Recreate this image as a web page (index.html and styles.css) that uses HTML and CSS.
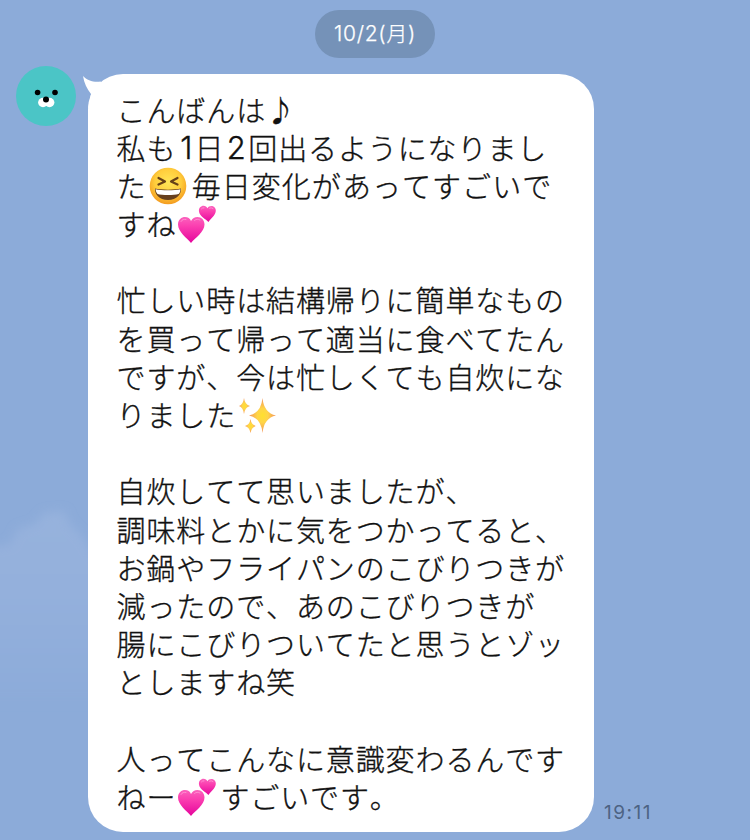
FILE: index.html
```
<!DOCTYPE html>
<html lang="ja">
<head>
<meta charset="utf-8">
<title>トーク</title>
<link rel="stylesheet" href="styles.css">
</head>
<body>
<svg class="defs" width="0" height="0" aria-hidden="true">
  <defs>
    <linearGradient id="pink" x1="0" y1="0" x2="0" y2="1"><stop offset="0" stop-color="#fb62bd"/><stop offset=".35" stop-color="#fb3fb0"/><stop offset="1" stop-color="#e5059c"/></linearGradient>
    <radialGradient id="face" cx=".5" cy=".4" r=".6"><stop offset="0" stop-color="#ffe657"/><stop offset=".6" stop-color="#ffcd3c"/><stop offset="1" stop-color="#f39b20"/></radialGradient>
    <radialGradient id="gold"><stop offset="0" stop-color="#ffe02e"/><stop offset=".4" stop-color="#ffd548"/><stop offset="1" stop-color="#f3935c"/></radialGradient>
    <filter id="soft" x="-30%" y="-30%" width="160%" height="160%"><feGaussianBlur stdDeviation="5"/></filter>
    <linearGradient id="cloud" x1="0" y1="0" x2="0" y2="1"><stop offset="0" stop-color="#96b2dd"/><stop offset=".4" stop-color="#94b0dc"/><stop offset="1" stop-color="#8cabd9"/></linearGradient>
    <symbol id="hearts" viewBox="0 0 40 40">
      <path fill="url(#pink)" d="M14 38C10 33 1 27 1 19.500C1 14.500 4.500 12 8 12C11 12 13 13.500 14 16C15.500 13.500 17.500 12 20.500 12C24.500 12 27.500 15 27.500 19.500C27.500 27 18 33 14 38Z"/>
      <path fill="url(#pink)" d="M31.500 17C29 14 22.500 11.500 22 6.500C21.500 3 24 .8 26.500 .8C28.500 .8 29.700 1.700 30.500 3.300C31.200 1.700 32.500 .9 34.500 .9C37 .9 39 3 38.800 6C38.300 11 33.500 13.500 31.500 17Z"/>
      <path fill="none" stroke="#ff9ad6" stroke-linecap="round" opacity=".8" d="M4 16.500C5 14.500 7 14 9 14.500M17.500 15.500C19 14 21 13.800 23 15M24.500 3.800Q25.500 2.500 27 2.800M32.500 3.200Q34 2 36 3.500"/>
    </symbol>
  </defs>
</svg>
<main class="chat">
  <svg class="sky" viewBox="0 0 88 220" aria-hidden="true"><path filter="url(#soft)" fill="url(#cloud)" d="M-15 52L10 48L18 33L35 28L44 17L64 15L70 28L82 40L100 68V205H-15Z"/></svg>
  <header class="date">10/2(<span class="day">月</span>)</header>
  <section class="row">
    <svg class="avatar" viewBox="0 0 60 60" aria-hidden="true">
      <circle cx="30" cy="30" r="30" fill="#4bc5c6"/>
      <circle cx="21.600" cy="26.500" r="2.800"/><circle cx="39" cy="26.500" r="2.800"/>
      <ellipse cx="27" cy="36.500" rx="4.900" ry="4.700" fill="#fff"/><ellipse cx="33.500" cy="36.500" rx="4.900" ry="4.700" fill="#fff"/>
      <circle cx="30" cy="33.500" r="3"/>
    </svg>
    <article class="bubble">
      <svg class="tail" viewBox="0 0 40 40" aria-hidden="true"><path fill="#fff" d="M1 2C5 6.500 12 8.500 18.500 7.500L32 20L6 34L9 20C5 15 2 9 1 2Z"/></svg>
      <p>こんばんは<span class="note">♪</span></p>
      <p>私も<span class="num one">1</span>日<span class="num two">2</span>回出るようになりまし</p>
      <p class="wide">た<svg class="emoji" viewBox="0 0 44 38" aria-label="笑顔">
        <circle cx="21" cy="19" r="18.300" fill="url(#face)"/>
        <path fill="none" stroke="#674117" stroke-width="2.200" stroke-linecap="round" stroke-linejoin="round" d="M11.500 11L18 14.500L11.500 17.500M30.500 11L24 14.500L30.500 17.500"/>
        <path fill="#673f1d" d="M8 21.500C13 23 29 23 34 21.500C34.500 27 30 33 21 33S7.500 27 8 21.500Z"/>
        <path fill="#fff" d="M8.500 22.200C14 23.700 28 23.700 33.500 22.200C33.300 25 32 27 31.500 27C27 28.300 15 28.300 10.500 27Q9 25.500 8.500 22.200Z"/>
      </svg>毎日変化があってすごいで</p>
      <p>すね<svg class="emoji hearts"><use href="#hearts" width="40" height="40"/></svg></p>
      <p class="blank"></p>
      <p>忙しい時は結構帰りに簡単なもの</p>
      <p>を買って帰って適当に食べてたん</p>
      <p>ですが、今は忙しくても自炊にな</p>
      <p>りました<svg class="emoji" viewBox="0 0 44 38" aria-label="きらきら"><g fill="url(#gold)"><path d="M26.500 2Q28 17 40 19.500Q28 22 26.500 37Q25 22 13 19.500Q25 17 26.500 2Z"/><path d="M8 2Q8.800 8.500 14 10Q8.800 11.500 8 18Q7.200 11.500 3 10Q7.200 8.500 8 2Z"/><path d="M14.500 23Q15.300 28.700 20 30Q15.300 31.300 14.500 37Q13.700 31.300 9 30Q13.700 28.700 14.500 23Z"/></g></svg></p>
      <p class="blank"></p>
      <p>自炊してて思いましたが、</p>
      <p>調味料とかに気をつかってると、</p>
      <p>お鍋やフライパンのこびりつきが</p>
      <p>減ったので、あのこびりつきが</p>
      <p>腸にこびりついてたと思うとゾッ</p>
      <p>としますね笑</p>
      <p class="blank"></p>
      <p>人ってこんなに意識変わるんです</p>
      <p>ねー<svg class="emoji hearts"><use href="#hearts" width="40" height="40"/></svg>すごいです。</p>
    </article>
    <time class="time">19:11</time>
  </section>
</main>
</body>
</html>
```
FILE: styles.css
```
* { box-sizing: border-box; }
body { margin: 0; background: #8cabd9; }
.defs { position: absolute; }
.chat {
  position: relative;
  height: 840px;
  padding-top: 10px;
  overflow: hidden;
  font-family: Inter, "Noto Sans CJK JP", sans-serif;
}
.sky { position: absolute; left: 0; top: 496px; width: 88px; height: 220px; }
.date {
  width: 120px;
  height: 48px;
  margin: 0 auto;
  border-radius: 24px;
  background: #7592b8;
  color: #fff;
  font-size: 21px;
  font-weight: 300;
  line-height: 47px;
  text-align: center;
  letter-spacing: .7px;
  -webkit-text-stroke: .25px #fff;
}
.day { font-weight: 300; }
.row { display: flex; position: relative; padding: 16px 0 0 16px; }
.avatar { flex: none; width: 60px; height: 60px; margin-top: -8px; }
.bubble {
  position: relative;
  flex: none;
  width: 506px;
  height: 758px;
  margin-left: 12px;
  padding: 15.5px 0 0 28.6px;
  border-radius: 35px;
  background: #fff;
  color: #111;
  font-family: "Noto Sans CJK JP", sans-serif;
  font-weight: 300;
  font-size: 29px;
  font-kerning: none;
  letter-spacing: .89px;
  -webkit-text-stroke: .35px #111;
}
.tail { position: absolute; left: -6px; top: 0; width: 40px; height: 40px; }
.bubble p { display: flex; margin: 0; height: 38.2px; line-height: 38.2px; white-space: nowrap; }
.bubble .wide { letter-spacing: 1.05px; }
.num { font-family: Inter, sans-serif; font-weight: 300; font-size: 31px; line-height: 40px; letter-spacing: 0; text-align: center; }
.one { width: 18px; padding-left: 2px; }
.two { width: 24px; }
.emoji { flex: none; width: 44px; height: 38px; overflow: visible; margin-top: 1px; -webkit-text-stroke: 0; }
.wide .emoji { margin-right: 1px; }
.hearts { padding-left: 1px; }
.time { align-self: flex-end; margin: 0 0 7px 10px; color: #4d6384; font-size: 19px; line-height: 24px; letter-spacing: 1.5px; }
```
